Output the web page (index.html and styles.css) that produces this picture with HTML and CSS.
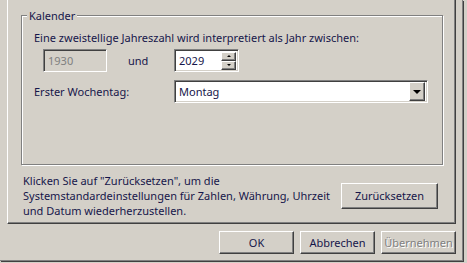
FILE: index.html
```html
<!DOCTYPE html>
<html lang="de">
<head>
  <meta charset="UTF-8" />
  <title>Regions- und Sprachoptionen</title>
  <link rel="stylesheet" href="styles.css">
</head>
<body>
  <div class="fenster">
    <div class="seite">
      <div class="gruppe">
        <div class="gruppe-titel">Kalender</div>
        <div class="hinweis">Eine zweistellige Jahreszahl wird interpretiert als Jahr zwischen:</div>
        <div class="raster">
          <div class="jahr-zeile">
            <div class="feld feld-aus">1930</div>
            <span class="und">und</span>
          </div>
          <div class="feld feld-spin">
            <span class="spin-wert">2029</span>
            <div class="spin-knoepfe">
              <div class="knopf-klein"><span class="pfeil-hoch"></span></div>
              <div class="knopf-klein"><span class="pfeil-runter"></span></div>
            </div>
          </div>
          <div class="beschriftung">Erster Wochentag:</div>
          <div class="feld feld-auswahl">
            <span class="auswahl-wert">Montag</span>
            <div class="knopf-drop"><span class="pfeil-runter gross"></span></div>
          </div>
        </div>
      </div>

      <div class="zuruecksetzen">
        <p>Klicken Sie auf "Zurücksetzen", um die<br>Systemstandardeinstellungen für Zahlen, Währung, Uhrzeit<br>und Datum wiederherzustellen.</p>
        <button class="knopf knopf-breit">Zurücksetzen</button>
      </div>
    </div>

    <div class="knopfleiste">
      <button class="knopf">OK</button>
      <button class="knopf">Abbrechen</button>
      <button class="knopf" disabled>Übernehmen</button>
    </div>
  </div>
</body>
</html>
```

FILE: styles.css
```css
body {
  margin: 0;
  width: 467px;
  height: 263px;
  overflow: hidden;
  background: #d4d0c8;
  font-family: "Noto Sans", sans-serif;
  font-size: 11px;
  color: #16164a;
}
.fenster {
  width: 463px;
  height: 261px;
  padding-left: 7px;
  box-sizing: border-box;
  border-right: 1px solid #808080;
  border-bottom: 1px solid #808080;
  box-shadow: 1px 1px 0 #404040;
}
.seite {
  width: 449px;
  height: 224px;
  box-sizing: border-box;
  border-left: 1px solid #fff;
  border-right: 1px solid #404040;
  border-bottom: 1px solid #404040;
  box-shadow: inset -1px -1px 0 #808080;
  display: flow-root;
}
.gruppe {
  position: relative;
  width: 422px;
  height: 150px;
  margin: 15px 0 0 13px;
  box-sizing: border-box;
  border: 1px solid #808080;
  box-shadow: inset 1px 1px 0 #fff, 1px 1px 0 #fff;
  padding: 14px 0 0 12px;
}
.gruppe-titel {
  position: absolute;
  top: -8px;
  left: 5px;
  padding: 0 2px;
  background: #d4d0c8;
  line-height: 15px;
}
.hinweis {
  line-height: 15px;
}
.raster {
  display: grid;
  grid-template-columns: 140px 254px;
  row-gap: 8px;
  margin-top: 4px;
  align-items: center;
}
.jahr-zeile {
  display: flex;
  align-items: center;
}
.und {
  margin-left: 21px;
}
.feld {
  height: 23px;
  box-sizing: border-box;
  border: 1px solid;
  border-color: #808080 #fff #fff #808080;
  box-shadow: inset 1px 1px 0 #404040, inset -1px -1px 0 #d4d0c8;
  background: #fff;
  display: flex;
  align-items: center;
  padding-left: 4px;
}
.feld-aus {
  width: 64px;
  margin-left: 9px;
  background: #d4d0c8;
  color: #808080;
}
.feld-spin {
  width: 65px;
  padding-right: 2px;
}
.spin-wert,
.auswahl-wert {
  flex: 1;
}
.spin-knoepfe {
  display: flex;
  flex-direction: column;
}
.knopf-klein,
.knopf-drop {
  box-sizing: border-box;
  background: #d4d0c8;
  border: 1px solid;
  border-color: #fff #404040 #404040 #fff;
  box-shadow: inset -1px -1px 0 #808080;
  display: flex;
  align-items: center;
  justify-content: center;
}
.knopf-klein {
  width: 15px;
  height: 9px;
}
.knopf-drop {
  width: 16px;
  height: 19px;
}
.feld-auswahl {
  padding-right: 2px;
}
.pfeil-hoch,
.pfeil-runter {
  width: 0;
  height: 0;
  border-left: 2px solid transparent;
  border-right: 2px solid transparent;
}
.pfeil-hoch {
  border-bottom: 2px solid #000;
}
.pfeil-runter {
  border-top: 2px solid #000;
}
.pfeil-runter.gross {
  border-left-width: 4px;
  border-right-width: 4px;
  border-top-width: 4px;
}
.beschriftung {
  height: 23px;
  line-height: 23px;
}
.zuruecksetzen {
  display: flex;
  align-items: center;
  margin: 8px 17px 0 15px;
}
.zuruecksetzen p {
  flex: 1;
  margin: 0;
  line-height: 15px;
}
.knopf {
  width: 75px;
  height: 23px;
  box-sizing: border-box;
  background: #d4d0c8;
  border: 1px solid;
  border-color: #fff #404040 #404040 #fff;
  box-shadow: inset -1px -1px 0 #808080;
  font: inherit;
  color: inherit;
  padding: 0;
}
.knopf-breit {
  width: 97px;
  height: 26px;
  margin-left: 4px;
}
.knopf:disabled {
  color: #808080;
  text-shadow: 1px 1px 0 #fff;
}
.knopfleiste {
  display: flex;
  justify-content: flex-end;
  gap: 6px;
  width: 449px;
  margin-top: 7px;
}
```
